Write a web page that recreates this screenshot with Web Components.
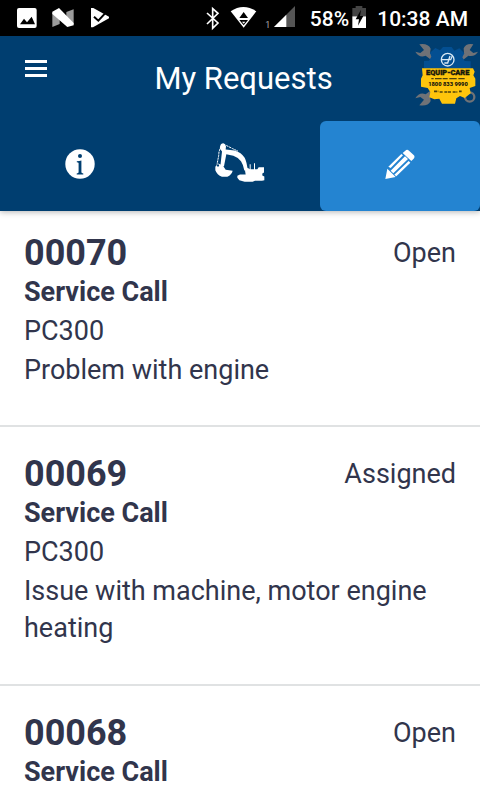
<!DOCTYPE html>
<html lang="en">
<head>
<meta charset="utf-8">
<title>My Requests</title>
<style>
    body {
        margin: 0;
        width: 480px;
        height: 800px;
        overflow: hidden;
        background: #fff;
        color: #31354c;
        font-family: Roboto, "Liberation Sans", sans-serif;
    }
</style>
</head>
<body>
<status-bar battery="58%" time="10:38 AM"></status-bar>
<app-header>
    My Requests
    <tab-bar slot="tabs"></tab-bar>
</app-header>
<main>
    <request-item number="00070" status="Open" type="Service Call" model="PC300" first>Problem with engine</request-item>
    <request-item number="00069" status="Assigned" type="Service Call" model="PC300">Issue with machine, motor engine heating</request-item>
    <request-item number="00068" status="Open" type="Service Call" last></request-item>
</main>

<script>
class StatusBar extends HTMLElement {
    constructor() {
        super();
        this.attachShadow({ mode: 'open' });
    }

    connectedCallback() {
        this.shadowRoot.innerHTML = `
        <style>
            :host {
                display: flex;
                justify-content: space-between;
                height: 36px;
                background: #000;
                color: #fff;
                font-size: 21px;
                font-weight: 500;
                line-height: 38px;
            }

            svg {
                display: block;
                height: 36px;
                flex: none;
            }

            .right {
                display: flex;
                padding-right: 12px;
            }

            .time {
                margin-left: 8px;
            }
        </style>
        <svg width="120" viewBox="0 0 360 108">
            <rect x="51" y="24" width="59" height="60" rx="6" fill="#fff"/>
            <path d="M60 73l12-17 9 11 14-17 10 23z" fill="#000"/>
            <path d="M157 38l22-8v42l-22 9zM199 36l22-8v43l-22 8z" fill="#9b9b9b"/>
            <path d="M157 35l20-11 44 45v7l-19 5-45-39z" fill="#fff"/>
            <path d="M273 24h7l47 26v5l-48 27h-6z" fill="#fff"/>
            <path d="M282 50l13 12 23-25" fill="none" stroke="#000" stroke-width="6"/>
        </svg>
        <div class="right">
            <svg width="115" viewBox="0 0 345 108">
                <path d="M36 39l33 30-16 16V26l16 14-33 32" fill="none" stroke="#fff" stroke-width="5"/>
                <path d="M107 34q38-26 77 0l-38 49z" fill="#fff"/>
                <path d="M146 36l13 18h-26zM133 60h26l-13 16z" fill="#000"/>
                <path d="M141 65h10l-5 6z" fill="#fff"/>
                <text x="211" y="83" font-size="27" font-weight="400" fill="#aaa">1</text>
                <path d="M237 81l63-63v63z" fill="#555"/>
                <path d="M237 81l37-37v37z" fill="#fff"/>
            </svg>
            <span class="battery"></span>
            <svg width="20" viewBox="0 0 60 108">
                <path d="M10 24h10v-6h20v6h11v25H10z" fill="#444"/>
                <path d="M10 49h41v35H10z" fill="#fff"/>
                <path d="M36 29L20 58h10l-3 19 16-29H33z" fill="#000"/>
            </svg>
            <span class="time"></span>
        </div>
        `;
        this.shadowRoot.querySelector('.battery').textContent = this.getAttribute('battery');
        this.shadowRoot.querySelector('.time').textContent = this.getAttribute('time');
    }
}

class BrandLogo extends HTMLElement {
    constructor() {
        super();
        this.attachShadow({ mode: 'open' });
    }

    connectedCallback() {
        this.shadowRoot.innerHTML = `
        <style>
            :host {
                display: block;
                width: 75px;
                height: 75px;
            }

            svg {
                display: block;
            }

            text {
                font-family: Roboto, sans-serif;
                font-weight: 900;
                text-anchor: middle;
                fill: #18180c;
            }
        </style>
        <svg width="75" height="75" viewBox="0 0 225 225">
            <g fill="#6f7277">
                <path d="M43 25q26-4 34 13l-2 14 11 9-10 9-14-11q-19 8-31-12l15 4 11-9zM205 25q-22-4-29 12l1 15-11 10 9 9 15-12q20 4 29-12l-14 4-11-9z"/>
                <path d="M43 208q26 4 34-13l-2-13 11-10-10-8-14 11q-19-8-31 12l15-4 11 8z"/>
                <circle cx="194" cy="183" r="14" fill="none" stroke="#6f7277" stroke-width="7"/>
                <path d="M183 176l-16-13 6-7 16 15z"/>
            </g>
            <path d="M57 97V75l15-1 7-12-4-12 16-14 14 7 9-10h26l8 11 15-7 15 15-6 12 7 11 18 1v21z" fill="#034f92"/>
            <path d="M51 97h153l5 10-4 11 6 10v22l-17 6 3 16-18 14-14-6-11 7-4 16h-39l-8-15-15 2-15-6 3-16-8-12-20-4V128l5-10z" fill="#fec50c"/>
            <circle cx="128" cy="71" r="19" fill="none" stroke="#d9e9f5" stroke-width="4"/>
            <path d="M111 71h26l5-11M118 81h10l7-21" fill="none" stroke="#d9e9f5" stroke-width="4"/>
            <text x="128" y="118" font-size="20" textLength="130" lengthAdjust="spacingAndGlyphs" stroke="#18180c" stroke-width="1">EQUIP-CARE</text>
            <path d="M79 128h7m4 0h20m3 0h15m5 0h22m5 0h19" stroke="#4d420c" stroke-width="4"/>
            <text x="129" y="150" font-size="17" textLength="119" lengthAdjust="spacingAndGlyphs">1800 833 9990</text>
            <path d="M87 166h13m4 2h9m5 0h21m4 0h14m5-2h8" stroke="#4d420c" stroke-width="5" stroke-dasharray="9 2"/>
        </svg>
        `;
    }
}

class AppHeader extends HTMLElement {
    constructor() {
        super();
        this.attachShadow({ mode: 'open' });
    }

    connectedCallback() {
        this.shadowRoot.innerHTML = `
        <style>
            :host {
                display: block;
                height: 175px;
                background: #003e70;
                color: #fff;
                box-shadow: 0 1px 6px rgba(0, 0, 0, .3);
            }

            .bar {
                display: grid;
                grid-template-columns: 75px 1fr 75px;
                height: 85px;
            }

            .menu {
                display: flex;
                flex-direction: column;
                gap: 4px;
                padding: 24px 0 0 25px;
            }

            .menu i {
                width: 22px;
                height: 3px;
                background: #fff;
            }

            h1 {
                margin: 0;
                padding-left: 7px;
                font-size: 31px;
                font-weight: 400;
                line-height: 86px;
                height: 85px;
                text-align: center;
                white-space: nowrap;
            }
        </style>
        <div class="bar">
            <div class="menu"><i></i><i></i><i></i></div>
            <h1><slot></slot></h1>
            <brand-logo></brand-logo>
        </div>
        <slot name="tabs"></slot>
        `;
    }
}

class TabBar extends HTMLElement {
    constructor() {
        super();
        this.attachShadow({ mode: 'open' });
    }

    connectedCallback() {
        this.shadowRoot.innerHTML = `
        <style>
            :host {
                display: grid;
                grid-template-columns: repeat(3, 1fr);
                height: 90px;
            }

            div {
                display: flex;
                align-items: center;
                justify-content: center;
                padding-bottom: 5px;
                border-radius: 6px;
            }

            .active {
                background: #2484d1;
            }
        </style>
        <div>
            <svg width="30" height="30" viewBox="0 0 30 30">
                <circle cx="15" cy="15" r="14.7" fill="#fff"/>
                <circle cx="15" cy="7" r="2" fill="#003e70"/>
                <path d="M11.8 12.2q2.500-.1 4.600-.8V23.300q0 1 1.900 1.100v1h-6.600v-1q1.900-.1 1.900-1.100V14.200q0-1-1.800-1z" fill="#003e70"/>
            </svg>
        </div>
        <div>
            <svg width="60" height="44" viewBox="30 34.500 180 132" fill="#fff">
                <path d="M61 46q1-8 9-8 7 1 8 10l-1 9 27 3q20 6 30 22 7 14 9 38h-10q-3-18-10-28-9-11-23-16l-21-5-7 36H61l5-44-6-8z"/>
                <path d="M46 109l8-10 14 5 9 14 21 3q-3 12-16 18H66q-15-6-20-20z"/>
                <path d="M63 46l-6 18-1 12-5 26M79 45l18 9 17 8" fill="none" stroke="#fff" stroke-width="3" stroke-dasharray="7 2"/>
                <circle cx="54" cy="105" r="3.500" fill="#003e70"/>
                <path d="M112 142V136L120 132H137L135 120L143 112L149 116V101H152V116H162V98H165V116H172L176 110H192V126L187 129V135L193 138V149L186 151H165L158 154H134L118 149Z"/>
            </svg>
        </div>
        <div class="active">
            <svg width="30" height="30" viewBox="225 115 90 90" fill="#fff">
                <path d="M286 120q5-5 11 0l14 13q5 5 0 11l-7 7-26-24zM232 174l25 25-31 6z"/>
                <path d="M274 130l5 4-37 38-7-4zM296 151l5 5-42 41-6-5zM285 137l9 8-44 43-8-8z"/>
            </svg>
        </div>
        `;
    }
}

class RequestItem extends HTMLElement {
    constructor() {
        super();
        this.attachShadow({ mode: 'open' });
    }

    connectedCallback() {
        const model = this.getAttribute('model');
        this.shadowRoot.innerHTML = `
        <style>
            :host {
                display: block;
                padding: 25px 24px 37px;
                border-bottom: 2px solid #e0e2e3;
                font-size: 27px;
                line-height: 38px;
            }

            :host([first]) {
                padding: 20px 24px 36px;
            }

            :host([last]) {
                padding-bottom: 0;
                border: 0;
            }

            .top {
                display: flex;
                justify-content: space-between;
                height: 42px;
                line-height: 44px;
            }

            .number {
                font-size: 36px;
                font-weight: 700;
            }

            .type {
                height: 39px;
                font-weight: 700;
            }

            .model {
                height: 39px;
            }

            .problem {
                padding-top: 1px;
                line-height: 37px;
            }
        </style>
        <div class="top"><span class="number"></span><span class="status"></span></div>
        <div class="type"></div>
        ${model ? `<div class="model">${model}</div><div class="problem"><slot></slot></div>` : ''}
        `;
        for (const name of ['number', 'status', 'type']) {
            this.shadowRoot.querySelector('.' + name).textContent = this.getAttribute(name);
        }
    }
}

customElements.define('status-bar', StatusBar);
customElements.define('brand-logo', BrandLogo);
customElements.define('app-header', AppHeader);
customElements.define('tab-bar', TabBar);
customElements.define('request-item', RequestItem);
</script>
</body>
</html>
